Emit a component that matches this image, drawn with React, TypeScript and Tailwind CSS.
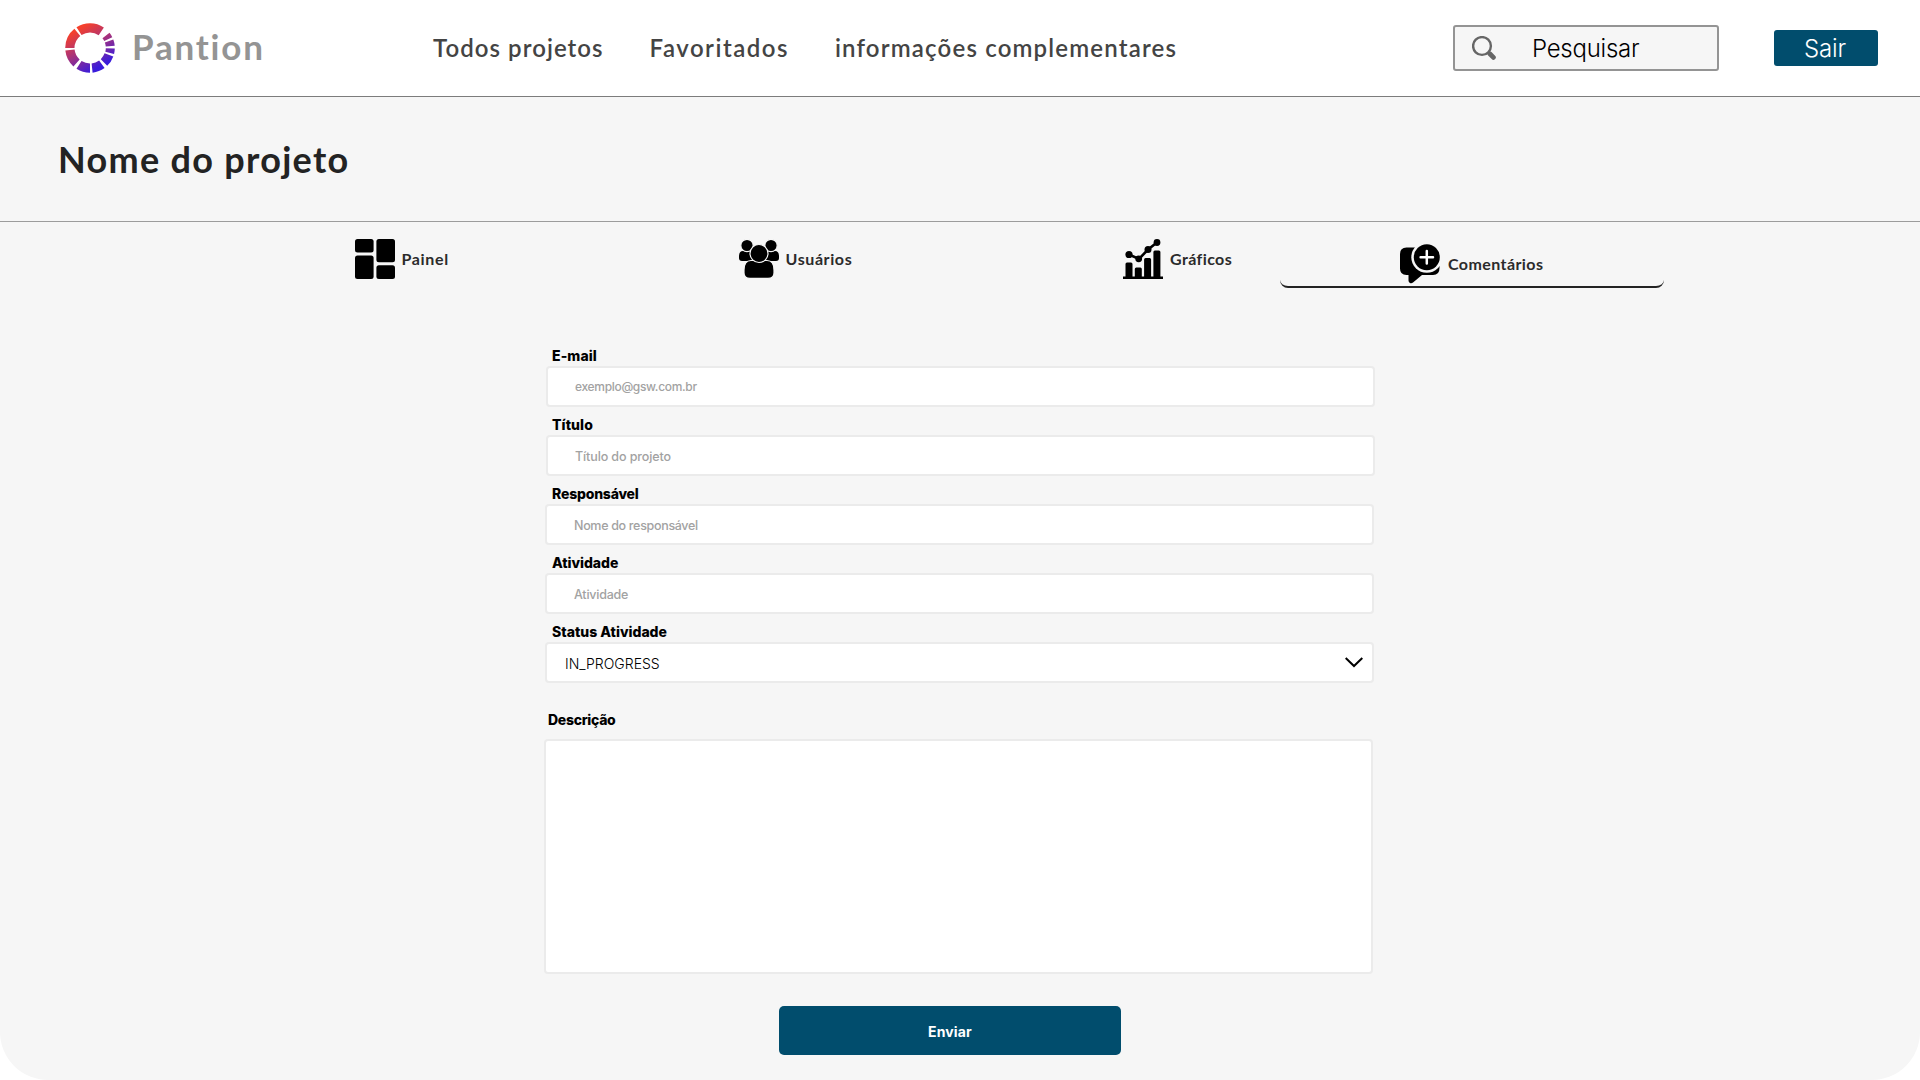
import React from "react";

const SEGMENTS: [number, number, number][] = [
  [-33, 34, 15.5],
  [-90, -39, 15.5],
  [-138, -96, 15.5],
  [-180, -147, 15.5],
  [144, 174, 15.5],
  [110, 136, 15.5],
  [91, 104, 15.8],
  [70, 85, 15.8],
  [52, 64, 15.8],
];

function segmentPath([from, to, inner]: [number, number, number]) {
  const outer = 24.8;
  const pt = (deg: number, r: number) => {
    const a = (deg * Math.PI) / 180;
    return `${(25 + r * Math.sin(a)).toFixed(2)} ${(25 - r * Math.cos(a)).toFixed(2)}`;
  };
  return `M${pt(from, outer)}A${outer} ${outer} 0 0 1 ${pt(to, outer)}L${pt(to, inner)}A${inner} ${inner} 0 0 0 ${pt(from, inner)}Z`;
}

function Logo() {
  return (
    <svg className="ml-[65px] size-[50px] shrink-0" viewBox="0 0 50 50">
      <defs>
        <linearGradient id="ring" gradientUnits="userSpaceOnUse" x1="10" y1="2" x2="36" y2="46">
          <stop offset="0.1" stopColor="#f5402c" />
          <stop offset="0.5" stopColor="#a8327a" />
          <stop offset="0.95" stopColor="#3a1cdb" />
        </linearGradient>
      </defs>
      {SEGMENTS.map((s) => (
        <path key={s[0]} d={segmentPath(s)} fill="url(#ring)" />
      ))}
    </svg>
  );
}

function PanelIcon() {
  return (
    <svg className="size-10 shrink-0" viewBox="0 0 40 40">
      <rect x="0" y="0" width="18.6" height="13.5" rx="2.5" />
      <rect x="0" y="16.5" width="18.6" height="23.5" rx="2.5" />
      <rect x="21.4" y="0" width="18.6" height="23.3" rx="2.5" />
      <rect x="21.4" y="26.3" width="18.6" height="13.7" rx="2.5" />
    </svg>
  );
}

function UsersIcon() {
  return (
    <svg className="size-10 shrink-0" viewBox="0 0 40 40">
      <path d="M0 17.5Q0 12 4 12h8q4 0 4 5v5H3q-3 0-3-3Z" />
      <path d="M40 17.5Q40 12 36 12h-8q-4 0-4 5v5h13q3 0 3-3Z" />
      <g stroke="#f6f6f6" strokeWidth="1.2">
        <circle cx="8" cy="6.5" r="6.2" />
        <circle cx="32" cy="6.5" r="6.2" />
        <path d="M5 31Q5 21.500 12 21.500h16Q35 21.500 35 31v3q0 5.300-6 5.300H11q-6 0-6-5.300Z" />
        <circle cx="20" cy="14.500" r="9" />
      </g>
    </svg>
  );
}

function ChartIcon() {
  return (
    <svg className="size-10 shrink-0" viewBox="0 0 40 40">
      <path d="M0 37.500h2.500V25q0-1.500 1.500-1.500h4q1.500 0 1.500 1.500v12.500h2.300V30q0-1.500 1.500-1.500h4q1.500 0 1.500 1.500v7.500h2.300V20.500q0-1.500 1.500-1.500h4q1.500 0 1.500 1.500v17h2.300V13q0-1.500 1.500-1.500h4q1.500 0 1.500 1.500v24.500H40V40H0Z" />
      <path d="M6 15.500l10 4.500 9-9.500 9-7" fill="none" stroke="#000" strokeWidth="2.600" />
      <circle cx="6" cy="15.500" r="3.600" />
      <circle cx="15.700" cy="19.800" r="3.400" />
      <circle cx="25" cy="10.500" r="3.500" />
      <circle cx="34" cy="3.500" r="3.400" />
    </svg>
  );
}

function CommentIcon() {
  return (
    <svg className="size-10 shrink-0" viewBox="0 0 40 40">
      <path d="M6.500 3.500H33q6.500 0 6.500 6.500V24q0 7-6.500 7H22l-9 7.600q-1.500 1-3 .4-1.500-.6-1.500-2.500V31h-2Q0 31 0 24.500V10Q0 3.500 6.500 3.500Z" />
      <path d="M24 0h16v22H24Z" fill="#f6f6f6" />
      <circle cx="26.800" cy="13.300" r="15.500" fill="#f6f6f6" />
      <circle cx="26.800" cy="13.300" r="13" />
      <path d="M26.800 7.100v12.400M20.600 13.300H33" stroke="#fff" strokeWidth="2.500" strokeLinecap="round" />
    </svg>
  );
}

function SearchIcon() {
  return (
    <svg className="size-6 shrink-0" viewBox="0 0 24 24" fill="none" stroke="#666">
      <circle cx="10" cy="10" r="8.900" strokeWidth="2.400" />
      <path d="M16.200 16.200l1.500 1.500" strokeWidth="3" />
      <path d="M17.800 17.800l3.600 3.600" strokeWidth="4.800" strokeLinecap="round" />
    </svg>
  );
}

function Field({ label, labelClass, children, className }: { label: string; labelClass: string; children: React.ReactNode; className: string }) {
  return (
    <div className={`h-[69px] w-[828.5px] ${className}`}>
      <div className={`h-[22px] whitespace-nowrap pt-px text-[14px] leading-[22px] font-extrabold text-black ${labelClass}`}>{label}</div>
      <div className="flex h-[41px] items-center rounded-[4px] border-2 border-[#ebebeb] bg-white whitespace-nowrap">{children}</div>
    </div>
  );
}

export default function App() {
  return (
    <div className="h-[1080px] w-[1920px] overflow-hidden bg-white font-['Lato',sans-serif]">
      <div className="flex h-[1080px] flex-col rounded-b-[48px] bg-[#f6f6f6]">
        <header className="flex h-[97px] shrink-0 items-center border-b border-[#7c7c7c] bg-white whitespace-nowrap">
          <Logo />
          <div className="ml-[17px] w-[298px] pb-[3px] text-[35px] leading-none font-bold tracking-[1.8px] text-[#949494]">Pantion</div>
          <nav className="flex text-[24px] font-semibold text-[#444]">
            <a className="w-[219.5px] pl-[3px] tracking-[1.05px]">Todos projetos</a>
            <a className="w-[185.5px] tracking-[1.5px]">Favoritados</a>
            <a className="w-[618px] tracking-[1.17px]">informações complementares</a>
          </nav>
          <div className="flex h-[46px] w-[266px] items-center rounded-[3px] border-2 border-[#949494] bg-[#f6f6f6] pl-[17px] font-['Inter',sans-serif] text-[24px] font-light text-black">
            <SearchIcon />
            <span className="ml-[36px] pt-[2px] tracking-[-0.25px]">Pesquisar</span>
          </div>
          <button className="ml-[55px] h-9 w-[104px] rounded-[3px] bg-[#014d6d] pt-[2px] pr-[2px] font-['Inter',sans-serif] text-[24px] leading-none font-light tracking-[-0.1px] text-white">Sair</button>
        </header>
        <div className="flex h-[125px] shrink-0 items-center border-b border-[#9c9c9c] pl-[58px] whitespace-nowrap">
          <h1 className="text-[36px] font-bold tracking-[1.3px] text-[#232323]">Nome do projeto</h1>
        </div>
        <div className="flex h-[66px] shrink-0 text-[16px] leading-10 font-bold whitespace-nowrap text-[#2b2b2b]">
          <div className="ml-[355px] flex w-[384px] pt-[17px]">
            <PanelIcon />
            <span className="ml-[6.5px] tracking-[0.65px]">Painel</span>
          </div>
          <div className="flex w-[384px] pt-[17px]">
            <UsersIcon />
            <span className="ml-[6.5px] tracking-[0.6px]">Usuários</span>
          </div>
          <div className="flex w-[157px] pt-[17px]">
            <ChartIcon />
            <span className="ml-[7px] tracking-[0.4px]">Gráficos</span>
          </div>
          <div className="flex w-[384px] rounded-[8px] border-b-2 border-[#232323] pt-[22px] pl-[120px]">
            <CommentIcon />
            <span className="ml-[8px] tracking-[0.42px]">Comentários</span>
          </div>
        </div>
        <form className="flex flex-col pt-[56px] font-['Inter',sans-serif]">
          <Field label="E-mail" labelClass="pl-[6px] tracking-[0.1px]" className="ml-[546px]">
            <span className="pt-px pl-[27px] text-[12px] font-medium tracking-[-0.32px] text-[#a2a2a2]">exemplo@gsw.com.br</span>
          </Field>
          <Field label="Título" labelClass="pl-[6px] tracking-[0.1px]" className="ml-[546px]">
            <span className="pt-[3px] pl-[27px] text-[12.5px] font-medium tracking-[-0.11px] text-[#a2a2a2]">Título do projeto</span>
          </Field>
          <Field label="Responsável" labelClass="pl-[7px] tracking-[-0.2px]" className="ml-[545px]">
            <span className="pt-[3px] pl-[27px] text-[12.5px] font-medium tracking-[-0.32px] text-[#a2a2a2]">Nome do responsável</span>
          </Field>
          <Field label="Atividade" labelClass="pl-[7px] tracking-[-0.05px]" className="ml-[545px]">
            <span className="pt-[3px] pl-[27px] text-[12.5px] font-medium tracking-[-0.23px] text-[#a2a2a2]">Atividade</span>
          </Field>
          <Field label="Status Atividade" labelClass="pl-[7px]" className="ml-[545px]">
            <span className="w-[798px] pt-[2px] pl-[18px] text-[14px] font-light text-black">IN_PROGRESS</span>
            <svg className="mb-px h-[11px] w-[18px]" viewBox="0 0 18 11" fill="none" stroke="#000" strokeWidth="2">
              <path d="M.7 1l8.300 8 8.300-8" />
            </svg>
          </Field>
          <div className="mt-[20px] ml-[544px] h-[30px] pl-[4px] text-[14px] leading-[22px] font-extrabold tracking-[-0.3px] text-black">Descrição</div>
          <div className="ml-[544px] h-[235px] w-[829px] rounded-[4px] border-2 border-[#ebebeb] bg-white" />
          <button type="button" className="mt-[32px] ml-[779px] h-[49px] w-[342px] rounded-[5px] bg-[#014d6d] pt-[2px] text-[14px] font-bold tracking-[0.14px] text-white">Enviar</button>
        </form>
      </div>
    </div>
  );
}
